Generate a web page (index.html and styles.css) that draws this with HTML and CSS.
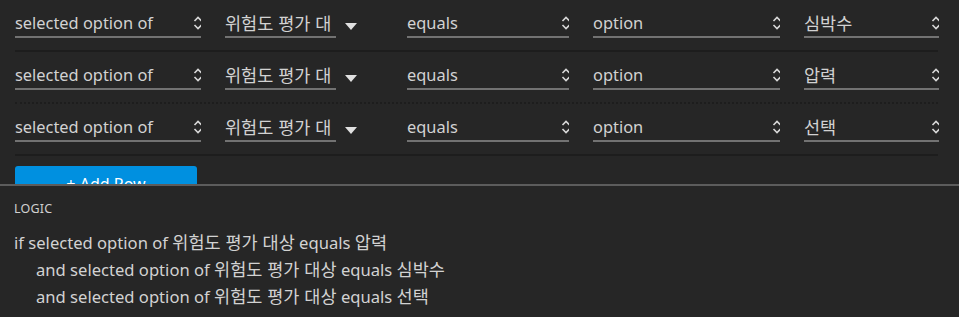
FILE: index.html
```html
<!DOCTYPE html>
<html lang="ko">
<head>
<meta charset="utf-8">
<link rel="stylesheet" href="styles.css">
</head>
<body>
<div class="top">
  <div class="rows">
    <div class="row">
      <div class="field"><span>selected option of</span><svg class="chev" viewBox="0 0 10 16"><polyline points="1.5,6 5,2.5 8.5,6"/><polyline points="1.5,10 5,13.5 8.5,10"/></svg></div>
      <div class="combo"><div class="field narrow"><span class="ko">위험도 평가 대</span></div><svg class="tri" viewBox="0 0 12 7"><polygon points="0,0 12,0 6,7"/></svg></div>
      <div class="field"><span>equals</span><svg class="chev" viewBox="0 0 10 16"><polyline points="1.5,6 5,2.5 8.5,6"/><polyline points="1.5,10 5,13.5 8.5,10"/></svg></div>
      <div class="field"><span>option</span><svg class="chev" viewBox="0 0 10 16"><polyline points="1.5,6 5,2.5 8.5,6"/><polyline points="1.5,10 5,13.5 8.5,10"/></svg></div>
      <div class="field"><span class="ko">심박수</span><svg class="chev" viewBox="0 0 10 16"><polyline points="1.5,6 5,2.5 8.5,6"/><polyline points="1.5,10 5,13.5 8.5,10"/></svg></div>
    </div>
    <div class="row dotted">
      <div class="field"><span>selected option of</span><svg class="chev" viewBox="0 0 10 16"><polyline points="1.5,6 5,2.5 8.5,6"/><polyline points="1.5,10 5,13.5 8.5,10"/></svg></div>
      <div class="combo"><div class="field narrow"><span class="ko">위험도 평가 대</span></div><svg class="tri" viewBox="0 0 12 7"><polygon points="0,0 12,0 6,7"/></svg></div>
      <div class="field"><span>equals</span><svg class="chev" viewBox="0 0 10 16"><polyline points="1.5,6 5,2.5 8.5,6"/><polyline points="1.5,10 5,13.5 8.5,10"/></svg></div>
      <div class="field"><span>option</span><svg class="chev" viewBox="0 0 10 16"><polyline points="1.5,6 5,2.5 8.5,6"/><polyline points="1.5,10 5,13.5 8.5,10"/></svg></div>
      <div class="field"><span class="ko">압력</span><svg class="chev" viewBox="0 0 10 16"><polyline points="1.5,6 5,2.5 8.5,6"/><polyline points="1.5,10 5,13.5 8.5,10"/></svg></div>
    </div>
    <div class="row">
      <div class="field"><span>selected option of</span><svg class="chev" viewBox="0 0 10 16"><polyline points="1.5,6 5,2.5 8.5,6"/><polyline points="1.5,10 5,13.5 8.5,10"/></svg></div>
      <div class="combo"><div class="field narrow"><span class="ko">위험도 평가 대</span></div><svg class="tri" viewBox="0 0 12 7"><polygon points="0,0 12,0 6,7"/></svg></div>
      <div class="field"><span>equals</span><svg class="chev" viewBox="0 0 10 16"><polyline points="1.5,6 5,2.5 8.5,6"/><polyline points="1.5,10 5,13.5 8.5,10"/></svg></div>
      <div class="field"><span>option</span><svg class="chev" viewBox="0 0 10 16"><polyline points="1.5,6 5,2.5 8.5,6"/><polyline points="1.5,10 5,13.5 8.5,10"/></svg></div>
      <div class="field"><span class="ko">선택</span><svg class="chev" viewBox="0 0 10 16"><polyline points="1.5,6 5,2.5 8.5,6"/><polyline points="1.5,10 5,13.5 8.5,10"/></svg></div>
    </div>
  </div>
  <button class="add">+ Add Row</button>
</div>
<div class="logic">
  <div class="label">LOGIC</div>
  <div class="lines">
    <div class="line">if selected option of <span class="ko">위험도 평가 대상</span> equals <span class="ko">압력</span></div>
    <div class="line indent">and selected option of <span class="ko">위험도 평가 대상</span> equals <span class="ko">심박수</span></div>
    <div class="line indent">and selected option of <span class="ko">위험도 평가 대상</span> equals <span class="ko">선택</span></div>
  </div>
</div>
</body>
</html>
```

FILE: styles.css
```css
html, body {
  margin: 0;
  padding: 0;
  background: #262626;
  color: #d2d2d2;
  font-family: "Noto Sans", "Noto Sans CJK KR", sans-serif;
  font-size: 16px;
}
.ko {
  font-family: "Noto Sans CJK KR", sans-serif;
  font-size: 17.5px;
}
.top {
  height: 184px;
  overflow: hidden;
}
.rows {
  padding: 0 21px 0 15px;
}
.row {
  display: grid;
  grid-template-columns: 186px 158px 162px 187px 135px;
  column-gap: 24px;
  height: 50px;
  align-items: start;
  border-bottom: 2px solid #1d1d1d;
}
.row.dotted {
  border-bottom: 2px dotted #1d1d1d;
}
.field {
  display: flex;
  align-items: center;
  justify-content: space-between;
  height: 26px;
  margin-top: 10px;
  border-bottom: 2px solid #727272;
  line-height: 26px;
  font-size: 16.4px;
  white-space: nowrap;
  overflow: hidden;
}
.field.narrow {
  width: 111px;
}
.combo {
  display: flex;
  align-items: flex-start;
}
.chev {
  width: 10px;
  height: 16px;
  flex: none;
  margin-right: -2px;
  fill: none;
  stroke: #d8d8d8;
  stroke-width: 1.6;
}
.tri {
  width: 12px;
  height: 7px;
  margin-left: 9px;
  margin-top: 23px;
  fill: #e0e0e0;
}
.add {
  display: block;
  margin: 10px 0 0 15px;
  width: 182px;
  height: 36px;
  border: none;
  border-radius: 3px;
  background: #0090e0;
  color: #ffffff;
  font-family: "Noto Sans", sans-serif;
  font-size: 16px;
  padding: 0;
}
.logic {
  border-top: 2px solid #5c5c5c;
  padding: 15px 14px 0 14px;
  height: 131px;
  box-sizing: border-box;
}
.label {
  font-size: 12.5px;
  line-height: 16px;
  color: #d0d0d0;
  letter-spacing: 0.2px;
}
.lines {
  margin-top: 14px;
  font-size: 16.6px;
}
.line {
  height: 27px;
  line-height: 24px;
  white-space: nowrap;
}
.line .ko {
  line-height: 1;
}
.indent {
  padding-left: 22px;
}
```
